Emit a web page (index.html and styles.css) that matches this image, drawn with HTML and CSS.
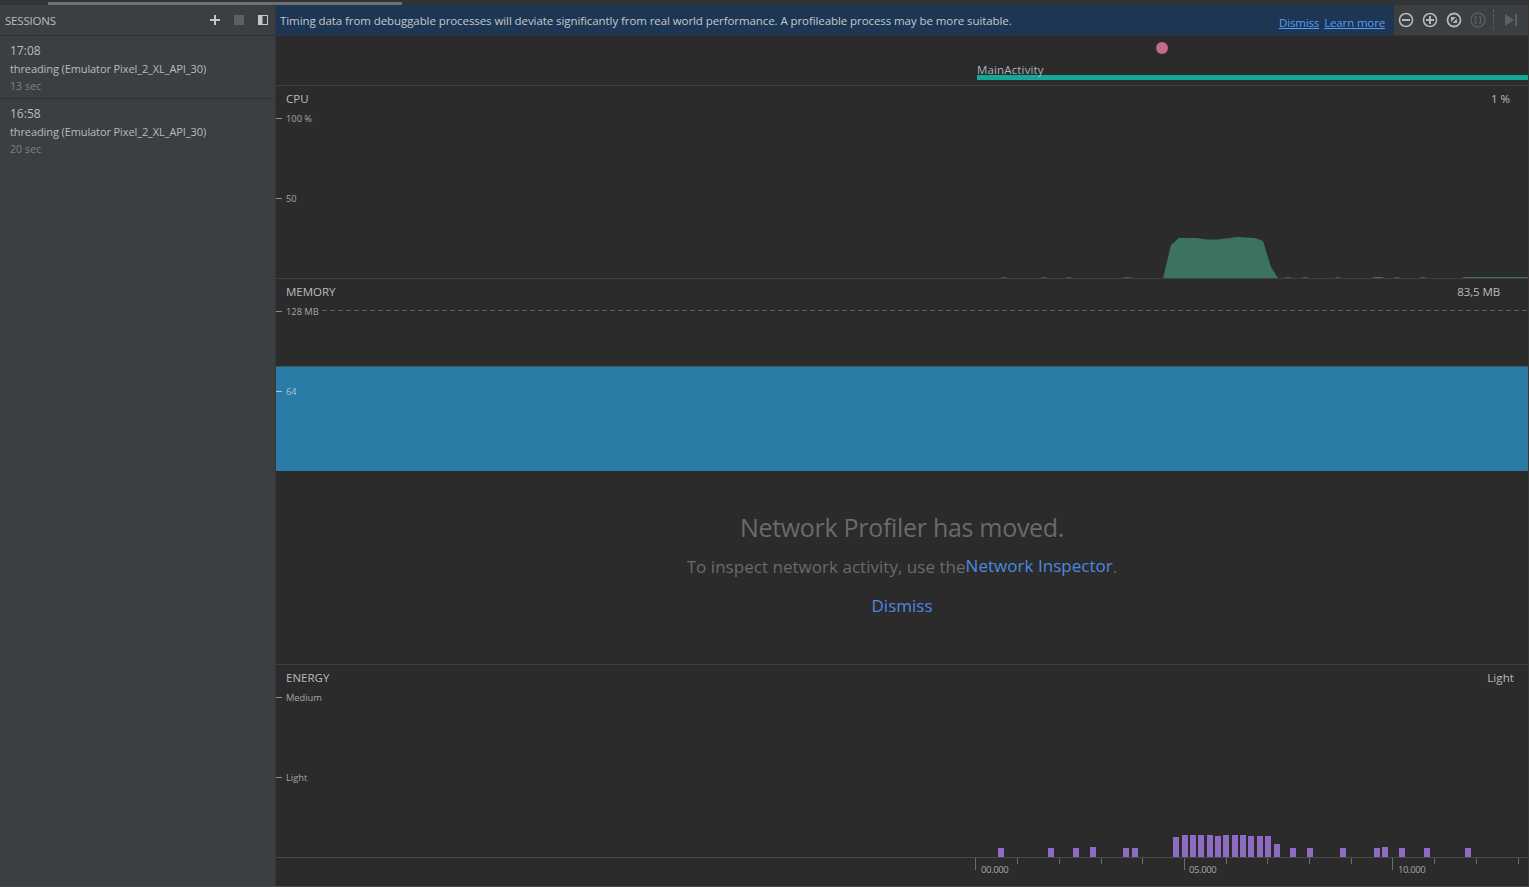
FILE: index.html
```html
<!DOCTYPE html>
<html lang="en">
<head>
  <meta charset="utf-8">
  <title>Profiler</title>
  <link rel="stylesheet" href="styles.css">
</head>
<body>
  <div class="topstrip"><div class="scrollthumb"></div></div>
  <div class="app">
    <aside class="sidebar">
      <div class="sidehead">
        <span class="sidetitle">SESSIONS</span>
        <svg class="sideicon plus" width="12" height="12" viewBox="0 0 12 12"><path d="M5 1h2v4h4v2H7v4H5V7H1V5h4z" fill="#c4c6c8"/></svg>
        <svg class="sideicon stop" width="10" height="10" viewBox="0 0 10 10"><rect width="10" height="10" fill="#5d5f61"/></svg>
        <svg class="sideicon panel" width="10" height="10" viewBox="0 0 10 10"><rect x="0.5" y="0.5" width="9" height="9" fill="none" stroke="#c4c6c8"/><rect x="0.5" y="0.5" width="4" height="9" fill="#c4c6c8"/></svg>
      </div>
      <div class="session">
        <div class="session-time">17:08</div>
        <div class="session-name">threading (Emulator Pixel_2_XL_API_30)</div>
        <div class="session-len">13 sec</div>
      </div>
      <div class="session">
        <div class="session-time">16:58</div>
        <div class="session-name">threading (Emulator Pixel_2_XL_API_30)</div>
        <div class="session-len">20 sec</div>
      </div>
    </aside>

    <main class="main">
      <div class="topbar">
        <div class="banner">
          <span class="banner-text">Timing data from debuggable processes will deviate significantly from real world performance. A profileable process may be more suitable.</span>
          <a class="banner-link">Dismiss</a>
          <a class="banner-link">Learn more</a>
        </div>
        <div class="tools">
          <svg width="16" height="16" viewBox="0 0 16 16"><circle cx="8" cy="8" r="6.500" fill="none" stroke="#b4b6b8" stroke-width="1.600"/><rect x="4" y="7" width="8" height="2" fill="#b4b6b8"/></svg>
          <svg width="16" height="16" viewBox="0 0 16 16"><circle cx="8" cy="8" r="6.500" fill="none" stroke="#b4b6b8" stroke-width="1.600"/><path d="M7 4h2v3h3v2H9v3H7V9H4V7h3z" fill="#b4b6b8"/></svg>
          <svg width="16" height="16" viewBox="0 0 16 16"><circle cx="8" cy="8" r="6.500" fill="none" stroke="#b4b6b8" stroke-width="1.800"/><path d="M5 5h5l-5 5zM11 6.500V11H6.500z" fill="#b4b6b8"/></svg>
          <svg width="16" height="16" viewBox="0 0 16 16"><circle cx="8" cy="8" r="7" fill="none" stroke="#5a5c5e" stroke-width="1.400"/><path d="M7 5H5.500v6H7M9 5h1.500v6H9" fill="none" stroke="#5a5c5e" stroke-width="1.400"/></svg>
          <span class="tools-sep"></span>
          <svg class="tools-last" width="14" height="14" viewBox="0 0 14 14"><path d="M1 1l9 6-9 6z" fill="#5d5f61"/><rect x="11" y="1" width="2" height="12" fill="#5d5f61"/></svg>
        </div>
      </div>

      <section class="events">
        <span class="event-dot"></span>
        <div class="activity"><span class="activity-name">MainActivity</span></div>
      </section>

      <section class="monitor cpu">
        <div class="monitor-head"><span>CPU</span><span class="monitor-value">1 %</span></div>
        <div class="axis-label label-top">100 %</div>
        <div class="axis-label label-mid">50</div>
        <svg class="chart" width="1252" height="192" viewBox="0 0 1252 192" fill="#3c735f">
          <path d="M887 192L895 159 903 152 920 152 931 153.500 942 153.500 961 151 979 152 987 155 995 181 1002 192Z"/>
          <path d="M724 192l4-1 4 1zM764 192l4-1 4 1zM789 192l4-1 4 1zM845 192l6-1 6 1zM1008 192l4-1 4 1zM1025 192l4-1 4 1zM1058 192l4-1 4 1zM1095 192l4-1 6 0 4 1zM1117 192l4-1 4 1zM1143 192l4-1 4 1zM1187 191H1252V192H1187z"/>
        </svg>
      </section>

      <section class="monitor memory">
        <div class="monitor-head"><span>MEMORY</span><span class="monitor-value mem-value">83,5 MB</span></div>
        <div class="dash-line"></div>
        <div class="axis-label label-top">128 MB</div>
        <div class="mem-fill"></div>
        <div class="axis-label label-mid label-on-fill">64</div>
      </section>

      <section class="moved">
        <h2 class="moved-title">Network Profiler has moved.</h2>
        <p class="moved-text">To inspect network activity, use the<a class="moved-link">Network Inspector</a>.</p>
        <a class="moved-dismiss">Dismiss</a>
      </section>

      <section class="monitor energy">
        <div class="monitor-head"><span>ENERGY</span><span class="monitor-value energy-value">Light</span></div>
        <div class="axis-label label-top">Medium</div>
        <div class="axis-label label-mid">Light</div>
        <svg class="chart" width="1252" height="192" viewBox="276 665 1252 192" fill="#8d6cc2">
          <rect x="998" y="848" width="6" height="9"/><rect x="1048" y="848" width="6" height="9"/>
          <rect x="1073" y="848" width="6" height="9"/><rect x="1090" y="847" width="6" height="10"/>
          <rect x="1123" y="848" width="6" height="9"/><rect x="1132" y="848" width="6" height="9"/>
          <rect x="1173" y="837" width="6" height="20"/><rect x="1182" y="835" width="6" height="22"/>
          <rect x="1190" y="835" width="6" height="22"/><rect x="1198" y="835" width="6" height="22"/>
          <rect x="1207" y="835" width="6" height="22"/><rect x="1215" y="836" width="6" height="21"/>
          <rect x="1223" y="835" width="6" height="22"/><rect x="1232" y="835" width="6" height="22"/>
          <rect x="1240" y="835" width="6" height="22"/><rect x="1248" y="836" width="6" height="21"/>
          <rect x="1257" y="836" width="6" height="21"/><rect x="1265" y="836" width="6" height="21"/>
          <rect x="1274" y="844" width="6" height="13"/><rect x="1290" y="848" width="6" height="9"/>
          <rect x="1307" y="848" width="6" height="9"/><rect x="1340" y="848" width="6" height="9"/>
          <rect x="1374" y="848" width="6" height="9"/><rect x="1382" y="847" width="6" height="10"/>
          <rect x="1399" y="848" width="6" height="9"/><rect x="1424" y="848" width="6" height="9"/>
          <rect x="1465" y="848" width="6" height="9"/>
        </svg>
      </section>

      <footer class="timeline">
        <svg class="chart" width="1252" height="28" viewBox="276 857 1252 28">
          <path d="M975.500 857v12M1184.500 857v12M1392.500 857v12" stroke="#6a6c6e" fill="none"/>
          <path d="M1017.500 857v6M1059.500 857v6M1101.500 857v6M1142.500 857v6M1226.500 857v6M1267.500 857v6M1309.500 857v6M1351.500 857v6M1434.500 857v6M1476.500 857v6M1518.500 857v6" stroke="#6a6c6e" fill="none"/>
        </svg>
        <span class="time-label t0">00.000</span>
        <span class="time-label t5">05.000</span>
        <span class="time-label t10">10.000</span>
      </footer>
    </main>
  </div>
</body>
</html>
```

FILE: styles.css
```css
html, body {
  margin: 0;
  height: 100%;
  overflow: hidden;
}
body {
  background-color: #2b2b2b;
  color: #bbbbbb;
  font-family: "Open Sans", "Noto Sans", sans-serif;
  font-size: 12px;
  display: flex;
  flex-direction: column;
}
.topstrip {
  height: 5px;
  background-color: #313335;
  flex: none;
}
.scrollthumb {
  width: 354px;
  height: 3px;
  margin-left: 48px;
  position: relative;
  top: 2px;
  background-color: #6d7072;
}
.app {
  display: flex;
  height: 881px;
  flex: none;
  border-bottom: 1px solid #47494b;
  border-right: 1px solid #3a3835;
}

/* sessions */
.sidebar {
  width: 275px;
  flex: none;
  background-color: #3c3f41;
  border-right: 1px solid #323436;
}
.sidehead {
  height: 30px;
  display: flex;
  align-items: center;
  border-bottom: 1px solid #2f3133;
  padding-left: 5px;
}
.sidetitle {
  flex: 1;
  font-size: 11.500px;
  letter-spacing: -0.200px;
}
.sideicon {
  flex: none;
}
.plus { margin-right: 13px; }
.stop { margin-right: 14px; }
.panel { margin-right: 7px; }
.session {
  height: 62px;
  border-bottom: 1px solid #2f3133;
  padding-left: 10px;
}
.session:last-child {
  border-bottom: none;
}
.session-time {
  font-size: 12px;
  line-height: 16px;
  padding-top: 7px;
}
.session-name {
  font-size: 11px;
  letter-spacing: -0.100px;
  line-height: 16px;
  padding-top: 2px;
}
.session-len {
  font-size: 10.500px;
  line-height: 14px;
  padding-top: 2px;
  color: #808284;
  letter-spacing: 0.100px;
}

/* right side */
.main {
  flex: 1;
  display: flex;
  flex-direction: column;
  min-width: 0;
}
.topbar {
  height: 30px;
  display: flex;
  flex: none;
  background-color: #3c3f41;
  border-bottom: 1px solid #323436;
}
.banner {
  width: 1118px;
  background-color: #1c3654;
  display: flex;
  align-items: center;
  padding-left: 4px;
  box-sizing: border-box;
}
.banner-text {
  flex: 1;
  font-size: 11.500px;
  letter-spacing: -0.080px;
  color: #c6c8ca;
  white-space: nowrap;
}
.banner-link {
  font-size: 11.500px;
  letter-spacing: -0.150px;
  color: #589df6;
  text-decoration: underline;
  margin-right: 5px;
  padding-top: 5px;
}
.banner-link:last-child {
  margin-right: 9px;
}
.tools {
  flex: 1;
  display: flex;
  align-items: center;
  gap: 8px;
  padding-left: 4px;
}
.tools-sep {
  width: 0;
  height: 20px;
  border-left: 1px dotted #6a6c6e;
  margin-left: -1px;
}
.tools-last {
  margin-left: 2px;
}
.events {
  height: 49px;
  flex: none;
  position: relative;
  border-bottom: 1px solid #3d3f41;
}
.event-dot {
  position: absolute;
  left: 880px;
  top: 6px;
  width: 12px;
  height: 12px;
  border-radius: 50%;
  background-color: #c26b90;
}
.activity {
  position: absolute;
  left: 701px;
  right: 0;
  bottom: 5px;
  height: 5px;
  background-color: #16a897;
}
.activity-name {
  position: absolute;
  left: 0;
  bottom: 2px;
  font-size: 11.500px;
  line-height: 16px;
  color: #a8b4bc;
  letter-spacing: 0.150px;
}

/* monitors */
.monitor {
  height: 192px;
  flex: none;
  position: relative;
  border-bottom: 1px solid #3d3f41;
}
.monitor-head {
  display: flex;
  justify-content: space-between;
  padding: 5px 18px 0 10px;
  font-size: 11.500px;
  line-height: 16px;
  position: relative;
  z-index: 1;
}
.mem-value {
  padding-right: 10px;
  letter-spacing: -0.100px;
}
.energy .monitor-head { padding-top: 5px; }
.energy-value {
  margin-right: -4px;
  letter-spacing: 0.100px;
}
.axis-label {
  position: absolute;
  left: 10px;
  font-size: 9.300px;
  line-height: 12px;
  color: #a4a6a8;
  z-index: 2;
}
.axis-label::before {
  content: "";
  position: absolute;
  left: -10px;
  top: 5px;
  width: 6px;
  height: 1px;
  background-color: #8a8c8e;
}
.label-top { top: 27px; }
.label-mid { top: 107px; }
.label-on-fill { color: #a9c6d8; }
.label-on-fill::before { background-color: #a9c6d8; }
.chart {
  position: absolute;
  left: 0;
  top: 0;
  display: block;
}
.dash-line {
  position: absolute;
  left: 46px;
  right: 0;
  top: 31px;
  height: 1px;
  background-image: repeating-linear-gradient(to right, #5c5e60 0, #5c5e60 5px, transparent 5px, transparent 8px);
}
.memory {
  border-bottom: none;
}
.mem-fill {
  position: absolute;
  left: 0;
  right: 0;
  top: 87px;
  bottom: 0;
  background-color: #2a7ba6;
  border-top: 1px solid #36566a;
}
.moved {
  height: 193px;
  flex: none;
  border-bottom: 1px solid #3d3f41;
  display: flex;
  flex-direction: column;
  align-items: center;
}
.moved-title {
  margin: 39px 0 0;
  font-size: 25px;
  line-height: 34px;
  font-weight: 400;
  color: #6a6a6a;
  letter-spacing: -0.300px;
}
.moved-text {
  margin: 11px 0 0;
  font-size: 17px;
  line-height: 24px;
  letter-spacing: 0.030px;
  color: #6a6a6a;
}
.moved-link {
  color: #4d88e0;
  position: relative;
  top: -1px;
}
.moved-dismiss {
  margin-top: 15px;
  font-size: 17px;
  line-height: 24px;
  color: #4d88e0;
}
.energy {
  border-bottom: 1px solid #47494b;
}
.timeline {
  flex: 1;
  position: relative;
}
.time-label {
  position: absolute;
  top: 5px;
  font-size: 9.500px;
  line-height: 14px;
  color: #a4a6a8;
  letter-spacing: -0.400px;
}
.t0 { left: 705px; }
.t5 { left: 913px; }
.t10 { left: 1122px; }
```
